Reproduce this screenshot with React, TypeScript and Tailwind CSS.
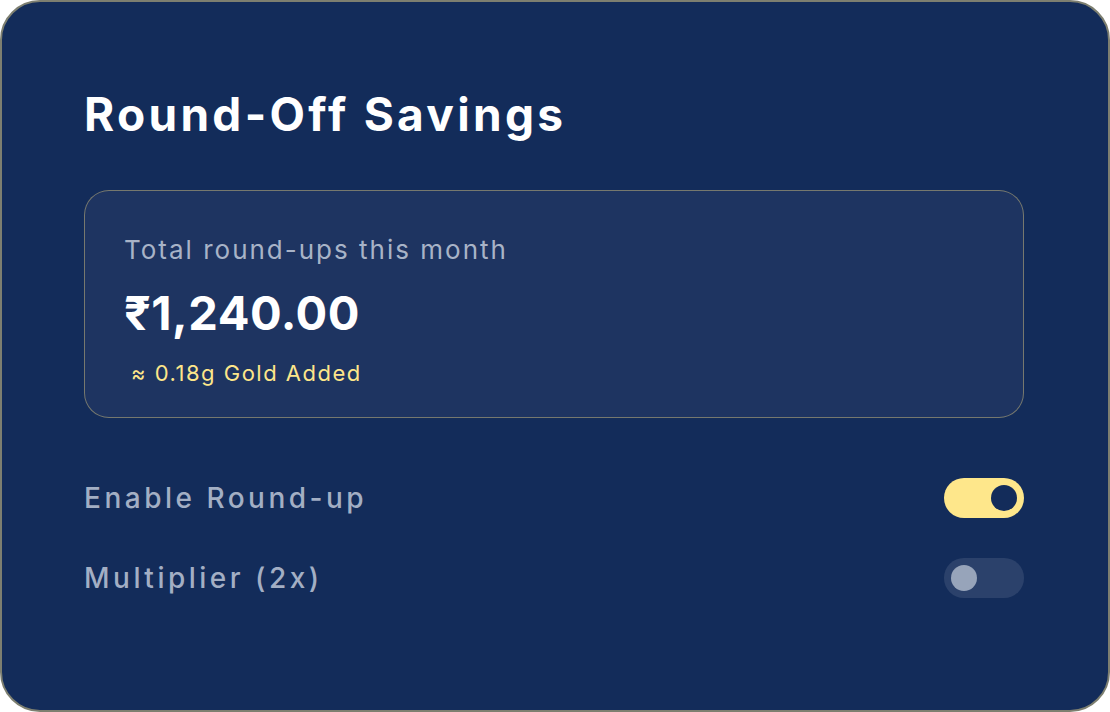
import React, { useState } from 'react';

function Toggle({ on, onClick }: { on: boolean; onClick: () => void }) {
  return (
    <button
      onClick={onClick}
      className={`w-[80px] h-[40px] rounded-full flex items-center px-[7px] ${on ? 'bg-[#fee78b] justify-end' : 'bg-white/10 justify-start'}`}
    >
      <span className={`w-[26px] h-[26px] rounded-full ${on ? 'bg-[#132c5a]' : 'bg-[#97a4ba]'}`} />
    </button>
  );
}

export default function App() {
  const [roundUp, setRoundUp] = useState(true);
  const [multiplier, setMultiplier] = useState(false);

  return (
    <div className="h-screen w-full bg-white font-['Inter',sans-serif]">
      <div className="h-full w-full bg-[#132c5a] border-2 border-[#7d7f70] rounded-[40px] pl-[82px] pr-[84px] pt-[84px]">
        <h1 className="text-[46px] leading-[56px] font-bold text-white tracking-[3.3px]">Round-Off Savings</h1>

        {/* Summary */}
        <div className="mt-[48px] h-[228px] rounded-[25px] border border-[#8c8a72]/80 bg-[#1e3461] px-[39px] pt-[42px]">
          <p className="text-[26px] leading-[34px] text-[#a8b3c7] tracking-[2px]">Total round-ups this month</p>
          <p className="mt-[18px] text-[47px] leading-[56px] font-bold text-white tracking-[0.5px]">₹1,240.00</p>
          <p className="mt-[17px] ml-[7px] text-[22px] leading-[30px] text-[#fde68a] tracking-[1.5px]">≈ 0.18g Gold Added</p>
        </div>

        {/* Settings */}
        <div className="mt-[60px] flex flex-col gap-[40px]">
          <div className="flex items-center justify-between">
            <span className="text-[28px] leading-[40px] font-medium text-[#a3afc4] tracking-[3.5px]">Enable Round-up</span>
            <Toggle on={roundUp} onClick={() => setRoundUp(!roundUp)} />
          </div>
          <div className="flex items-center justify-between">
            <span className="text-[28px] leading-[40px] font-medium text-[#a3afc4] tracking-[3.5px]">Multiplier (2x)</span>
            <Toggle on={multiplier} onClick={() => setMultiplier(!multiplier)} />
          </div>
        </div>
      </div>
    </div>
  );
}
